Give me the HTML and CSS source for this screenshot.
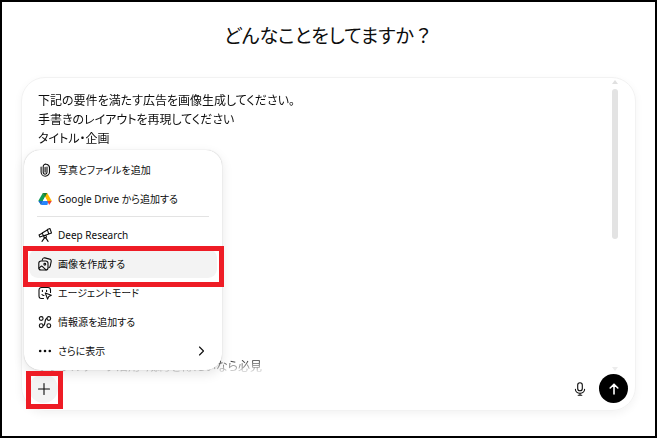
FILE: index.html
```html
<!DOCTYPE html>
<html lang="ja">
<head>
    <meta charset="UTF-8">
    <meta name="viewport" content="width=device-width, initial-scale=1.0">
    <title>どんなことをしてますか？</title>
    <link rel="stylesheet" href="styles.css">
</head>
<body>
    <main class="page">
        <h1 class="title">どんなことをしてますか<span class="full-width">？</span></h1>

        <form class="composer">
            <div class="prompt">
                <textarea class="prompt-text" aria-label="プロンプト">下記の要件を満たす広告を画像生成してください。
手書きのレイアウトを再現してください
タイトル・企画
デジタルデータ活用ガイド










デジタルデータ活用・成約を得たいなら必見</textarea>
                <div class="scrollbar">
                    <span class="arrow-up"></span>
                    <span class="thumb"></span>
                    <span class="arrow-down"></span>
                </div>
            </div>

            <div class="toolbar">
                <button type="button" class="add-btn marked" aria-label="追加">
                    <svg viewBox="0 0 14 14" width="14" height="14"><path d="M7 1.5v11M1.5 7h11"/></svg>
                </button>
                <button type="button" class="mic-btn" aria-label="音声入力">
                    <svg viewBox="0 0 14 14" width="14" height="14"><rect x="4.7" y=".7" width="4.6" height="8" rx="2.3"/><path d="M2.4 7.3a4.6 4 0 0 0 9.2 0M7 11.3v2M5.2 13.3h3.6"/></svg>
                </button>
                <button type="submit" class="send-btn" aria-label="送信">
                    <svg viewBox="0 0 14 14" width="14" height="14"><path d="M7 12V2.500M3.200 6L7 2.200 10.800 6"/></svg>
                </button>
            </div>

            <div class="menu">
                <button type="button" class="menu-item">
                    <svg viewBox="0 0 14 14" width="14" height="14"><path d="M9 4v5.300a1.900 1.900 0 0 1-3.800 0V3.600a2.500 2.500 0 0 1 3.200-2.400c2 .4 3.100 1.800 3.100 3.600v4.200a4.200 4.200 0 0 1-8.400 0V4M7.100 4.400v4.700"/></svg>
                    写真とファイルを追加
                </button>
                <button type="button" class="menu-item">
                    <svg class="drive" viewBox="0 0 14 14" width="14" height="14">
                        <path fill="#0f9d58" d="M4.800 1h4.400L3 12.600.400 8.800z"/>
                        <path fill="#ffba00" d="M4.800 1h4.400l4.600 7.900H9.300z"/>
                        <path fill="#2684fc" d="M4.800 8.900h5.500l-.900 4H3z"/>
                        <path fill="#188038" d="M4.800 1h4.400L7 4.900z"/>
                        <path fill="#1a66d6" d="M.400 8.900h4.400L3 12.900z"/>
                        <path fill="#ea4335" d="M9.300 8.900h4.500l-2.600 4z"/>
                        <path fill="#fff" d="M7 5.100l2.200 3.800H4.800z"/>
                    </svg>
                    Google Drive から追加する
                </button>
                <hr class="divider">
                <button type="button" class="menu-item">
                    <svg viewBox="0 0 14 14" width="14" height="14"><path d="M9.300 1.600l2.700-1 1.500 4.500-2.700.9zM9.300 2L4.200 4.900l1.200 3 5.400-2M4.200 5.200L1 6.900l.9 2.100 3.500-1.200M6.700 9.600L4 13.400M7.600 9.600l2.500 3.800"/><circle cx="7.100" cy="8.600" r="1.300"/></svg>
                    Deep Research
                </button>
                <button type="button" class="menu-item active marked">
                    <svg viewBox="0 0 14 14" width="14" height="14"><path d="M4.200 3.300l.3-1A1.900 1.900 0 0 1 6.800.9l4.900 1.200a1.900 1.900 0 0 1 1.500 2.300l-1 4.800a1.900 1.900 0 0 1-1.400 1.500"/><rect x=".8" y="4" width="9.200" height="9" rx="2.300"/><path d="M1 11.200l1.700-1.600a1.300 1.300 0 0 1 1.800 0L8 12.900"/><circle cx="6.800" cy="7.200" r=".9"/></svg>
                    画像を作成する
                </button>
                <button type="button" class="menu-item">
                    <svg viewBox="0 0 14 14" width="14" height="14"><path d="M5.500 12.500h-2a2.500 2.500 0 0 1-2.500-2.500V4a2.500 2.500 0 0 1 2.500-2.500h6.500A2.500 2.500 0 0 1 12.500 4v2.500M4.400 4.300v1.200M8.600 4.300v1.200M4 8.500q.8 1 2 1"/><path d="M7.300 7l6 2.200-2.500 1.200-1.200 2.700z"/></svg>
                    エージェントモード
                </button>
                <button type="button" class="menu-item">
                    <svg viewBox="0 0 14 14" width="14" height="14"><circle cx="3.200" cy="3.500" r="1.900"/><circle cx="10.800" cy="3.500" r="1.900"/><circle cx="3.200" cy="10.700" r="1.900"/><circle cx="10.800" cy="10.700" r="1.900"/><path d="M5.100 10.700c3 0 .800-7.200 3.800-7.200"/></svg>
                    情報源を追加する
                </button>
                <button type="button" class="menu-item">
                    <svg class="dots" viewBox="0 0 14 14" width="14" height="14"><circle cx="2.200" cy="7" r="1.300"/><circle cx="7" cy="7" r="1.300"/><circle cx="11.800" cy="7" r="1.300"/></svg>
                    さらに表示
                    <svg class="chevron" viewBox="0 0 14 14" width="14" height="14"><path d="M5.500 3l4 4-4 4"/></svg>
                </button>
            </div>
        </form>
    </main>
</body>
</html>
```

FILE: styles.css
```css
* {
    box-sizing: border-box;
}

body {
    margin: 0;
    font-family: "Noto Sans", "Noto Sans CJK JP", sans-serif;
    font-feature-settings: "palt";
    color: #0d0d0d;
    background-color: #fff;
}

button,
textarea {
    font-family: inherit;
    font-feature-settings: inherit;
    color: inherit;
    border: none;
    background: none;
    padding: 0;
    margin: 0;
}

button {
    cursor: pointer;
}

svg {
    flex: none;
    fill: none;
    stroke: currentColor;
    stroke-width: 1.1;
    stroke-linecap: round;
    stroke-linejoin: round;
}

.page {
    display: flex;
    flex-direction: column;
    min-height: 100vh;
    padding: 0 19px 25px;
    border: 2px solid #000;
}

.title {
    margin: 0;
    padding: 18px 0 25px;
    font-size: 19px;
    line-height: 32px;
    font-weight: 400;
    text-align: center;
}

.full-width {
    font-feature-settings: normal;
}

.composer {
    position: relative;
    display: flex;
    flex-direction: column;
    flex: 1;
    border: 1px solid #f2f2f2;
    border-radius: 24px;
    box-shadow: 0 3px 8px rgba(0, 0, 0, 0.05);
}

.prompt {
    display: flex;
    flex: 1;
    padding-right: 17px;
}

.prompt-text {
    flex: 1;
    padding: 13px 16px 0;
    font-size: 12px;
    line-height: 19px;
    resize: none;
    outline: none;
    overflow: hidden;
    -webkit-mask-image: linear-gradient(to top, transparent, #000 16px);
    mask-image: linear-gradient(to top, transparent, #000 16px);
}

.scrollbar {
    display: flex;
    flex-direction: column;
    width: 6px;
    padding: 2px 0 3px;
}

.thumb {
    height: 150px;
    margin: 5px 0 auto;
    border-radius: 3px;
    background-color: #e3e3e3;
}

.arrow-up,
.arrow-down {
    border: 3px solid transparent;
    border-top-width: 0;
    border-bottom: 4px solid #e0e0e0;
}

.arrow-down {
    border-top: 4px solid #ececec;
    border-bottom-width: 0;
}

.toolbar {
    display: flex;
    align-items: center;
    gap: 5px;
    padding: 0 7px 7px;
}

.toolbar button {
    display: flex;
    align-items: center;
    justify-content: center;
    width: 29px;
    height: 29px;
    border-radius: 50%;
}

.toolbar .add-btn {
    margin-right: auto;
    background-color: #f3f3f3;
}

.toolbar .send-btn {
    color: #fff;
    background-color: #000;
}

.send-btn svg {
    stroke-width: 1.6;
}

.menu {
    position: absolute;
    left: 2px;
    bottom: 40px;
    width: 198px;
    padding: 5px;
    border-radius: 16px;
    background-color: #fff;
    box-shadow: 0 0 1px rgba(0, 0, 0, 0.3), 0 4px 12px rgba(0, 0, 0, 0.1);
}

.menu-item {
    display: flex;
    align-items: center;
    gap: 6px;
    width: 100%;
    height: 29px;
    padding: 0 9px;
    border-radius: 9px;
    font-size: 10px;
    line-height: 16px;
    text-align: left;
}

.menu-item.active {
    background-color: #f3f3f3;
}

.menu-item .drive {
    stroke: none;
}

.menu-item .dots {
    fill: currentColor;
    stroke: none;
}

.menu-item .chevron {
    margin-left: auto;
}

.divider {
    height: 1px;
    margin: 3px 8px;
    border: none;
    background-color: #e3e3e3;
}

/* red callout frames */
.marked {
    position: relative;
}

.marked::after {
    content: "";
    position: absolute;
    border: 5px solid #ee1c25;
    pointer-events: none;
}

/* keep the frame above the next menu row */
.menu-item.marked::after {
    inset: -3px -7px -9px -6px;
    z-index: 1;
}

.add-btn.marked::after {
    inset: -3px -5px -6px -3px;
    z-index: 1;
}
```
